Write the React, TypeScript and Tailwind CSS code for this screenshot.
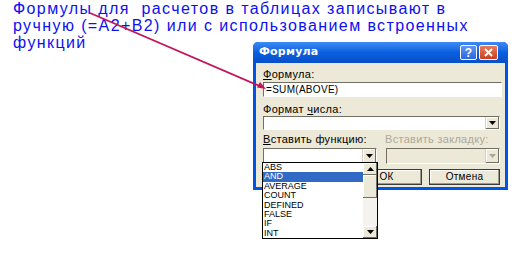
const items = ['ABS', 'AND', 'AVERAGE', 'COUNT', 'DEFINED', 'FALSE', 'IF', 'INT'];

function DropArrow({ disabled }: { disabled?: boolean }) {
  return (
    <div className="w-[14px] h-full bg-[#ece9d8] border-l border-[#d4d0c8] flex items-center justify-center shadow-[inset_-1px_-1px_0_#716f64,inset_1px_1px_0_#fff]">
      <svg width="7" height="4" viewBox="0 0 7 4">
        <path d="M0 0h7L3.5 4z" fill={disabled ? '#aca899' : '#000'} />
      </svg>
    </div>
  );
}

function Field({ w, h, arrow, disabled, children }: { w: string; h: string; arrow?: boolean; disabled?: boolean; children?: React.ReactNode }) {
  return (
    <div className={`${w} ${h} flex border-t border-l border-[#716f64] border-b border-r border-b-white border-r-white ${disabled ? 'bg-[#ece9d8]' : 'bg-white'}`}>
      <div className="flex-1 flex items-center pl-[2px] text-[10px] leading-none">{children}</div>
      {arrow && <DropArrow disabled={disabled} />}
    </div>
  );
}

function Btn({ label }: { label: string }) {
  return (
    <div className="w-[71px] h-[16px] bg-[#ece9d8] border border-[#3c3c3c] shadow-[inset_-1px_-1px_0_#9d9a8c,inset_1px_1px_0_#fff] flex items-center justify-center text-[10px] leading-none tracking-[0.3px]">
      {label}
    </div>
  );
}

export default function App() {
  return (
    <div className="relative w-[528px] h-[263px] bg-white overflow-hidden" style={{ fontFamily: '"Liberation Sans", Arial, sans-serif' }}>
      <div className="pl-[13px] text-[16px] leading-[17px] text-[#0c10f2] tracking-[1.4px] h-[42px]">
        <div>Формулы для&nbsp; расчетов в таблицах записывают в</div>
        <div>ручную (=A2+B2) или с использованием встроенных</div>
        <div>функций</div>
      </div>

      <div className="relative ml-[253px] w-[255px] h-[148px] flex flex-col rounded-t-[5px] bg-[#0054e3] px-[3px] pb-[3px]">
        <div className="h-[21px] flex items-center justify-between pl-[6px] pr-[3px] rounded-t-[5px] bg-gradient-to-b from-[#3d8bf5] via-[#0a5fe0] to-[#0850c8] -mx-[3px]">
          <span className="text-white font-bold text-[11px] tracking-[0.2px]" style={{ fontFamily: '"DejaVu Sans", sans-serif' }}>Формула</span>
          <div className="flex gap-[2px] mr-[7px]">
            <div className="w-[17px] h-[15px] rounded-[2px] border border-white bg-gradient-to-b from-[#5f95f5] to-[#2c66e0] flex items-center justify-center text-white font-bold text-[12px] leading-none">?</div>
            <div className="w-[19px] h-[15px] rounded-[2px] border border-white bg-gradient-to-b from-[#e8795c] to-[#c8401d] flex items-center justify-center">
              <svg width="9" height="9" viewBox="0 0 9 9"><path d="M1 1l7 7M8 1L1 8" stroke="#fff" strokeWidth="2" /></svg>
            </div>
          </div>
        </div>
        <div className="flex-1 bg-[#ece9d8] flex flex-col pl-[7px] text-[11px] leading-[12px] text-black tracking-[0.3px]">
          <div className="mt-[5px]"><span className="underline">Ф</span>ормула:</div>
          <div className="mt-[2px]">
            <Field w="w-[239px]" h="h-[15px]">=SUM(ABOVE)</Field>
          </div>
          <div className="mt-[6px]">Формат <span className="underline">ч</span>исла:</div>
          <div className="mt-[1px]">
            <Field w="w-[237px]" h="h-[14px]" arrow />
          </div>
          <div className="mt-[3px] flex">
            <div className="w-[122px]"><span className="underline">В</span>ставить функцию:</div>
            <div className="text-[#aca899]">Вставить закладку:</div>
          </div>
          <div className="mt-[3px] flex gap-[9px]">
            <Field w="w-[114px]" h="h-[16px]" arrow />
            <Field w="w-[114px]" h="h-[16px]" arrow disabled />
          </div>
          <div className="mt-[5px] flex gap-[7px] pl-[88px]">
            <Btn label="ОК" />
            <Btn label="Отмена" />
          </div>
        </div>

        <div className="absolute left-[9px] top-[120px] w-[116px] h-[77px] bg-white border border-black flex">
          <div className="flex-1 flex flex-col text-[9px] leading-[9.4px] overflow-hidden">
            {items.map((it) => (
              <div key={it} className={`pl-[1px] h-[9.4px] ${it === 'AND' ? 'bg-[#316ac5] text-white' : 'text-black'}`}>{it}</div>
            ))}
          </div>
          <div className="w-[14px] flex flex-col bg-[#f4f3ee]">
            <div className="h-[12px] bg-[#ece9d8] flex items-center justify-center shadow-[inset_-1px_-1px_0_#716f64,inset_1px_1px_0_#fff]">
              <svg width="7" height="4" viewBox="0 0 7 4"><path d="M0 4h7L3.5 0z" fill="#000" /></svg>
            </div>
            <div className="h-[23px] bg-[#ece9d8] shadow-[inset_-1px_-1px_0_#716f64,inset_1px_1px_0_#fff]" />
            <div className="flex-1" />
            <div className="h-[12px] bg-[#ece9d8] flex items-center justify-center shadow-[inset_-1px_-1px_0_#716f64,inset_1px_1px_0_#fff]">
              <svg width="7" height="4" viewBox="0 0 7 4"><path d="M0 0h7L3.5 4z" fill="#000" /></svg>
            </div>
          </div>
        </div>
      </div>

      <svg className="absolute left-0 top-0 pointer-events-none" width="528" height="263">
        <line x1="90" y1="13" x2="262" y2="87" stroke="#c4145c" strokeWidth="1.8" />
        <path d="M266 89l-9-1.5 3-5.5z" fill="#c4145c" />
      </svg>
    </div>
  );
}
